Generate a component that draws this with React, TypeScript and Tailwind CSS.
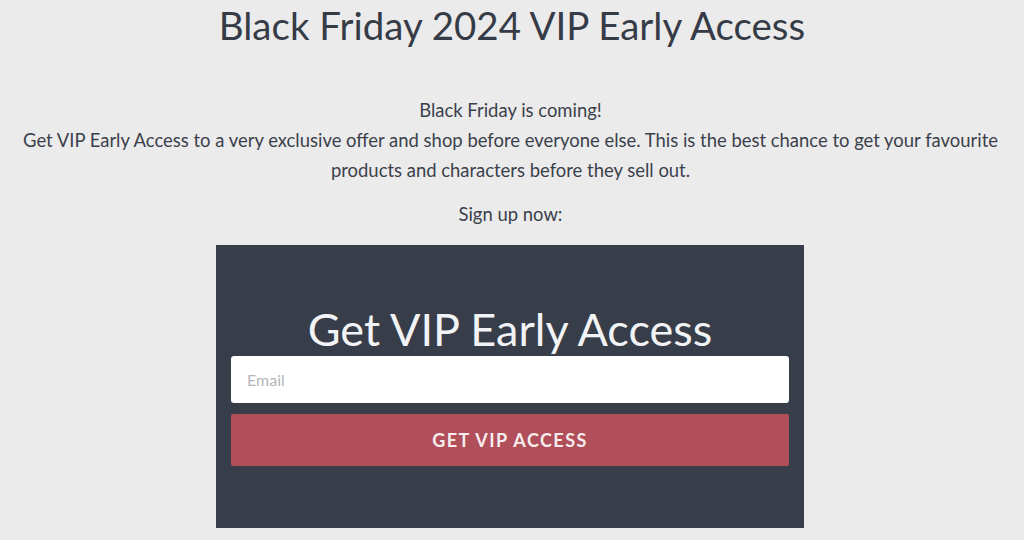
export default function App() {
  return (
    <div className="min-h-[540px] w-full bg-[#ebebeb] font-['Lato',sans-serif] text-[#3b414b]">
      <div className="flex flex-col items-center">
        {/* Page title */}
        <h1 className="text-[38.5px] leading-[50px] text-[#363c47]">
          Black Friday 2024 VIP Early Access
        </h1>

        {/* Intro copy */}
        <div className="mr-[3px] mt-[45px] text-center text-[18.45px] leading-[30px]">
          <p>Black Friday is coming!</p>
          <p className="whitespace-nowrap">
            Get VIP Early Access to a very exclusive offer and shop before everyone else. This is the best chance to get your favourite
            <br />
            products and characters before they sell out.
          </p>
          <p className="mt-[14px]">Sign up now:</p>
        </div>

        {/* Signup box */}
        <div className="mr-[4px] mt-[16px] flex h-[283px] w-[588px] flex-col bg-[#383e49] px-[15px] pt-[58px]">
          <h2 className="text-center text-[45px] leading-[52px] text-[#f2f3f6]">
            Get VIP Early Access
          </h2>
          <input
            type="email"
            placeholder="Email"
            className="mt-[1px] h-[47px] w-full rounded-[3px] bg-white px-[16px] text-[16px] text-[#333] outline-none placeholder:text-[#b3b6bb]"
          />
          <button className="mt-[11px] h-[52px] w-full rounded-[2px] bg-[#b04f59] text-[18px] font-bold tracking-[0.08em] text-[#f7eced]">
            GET VIP ACCESS
          </button>
        </div>
      </div>
    </div>
  );
}
